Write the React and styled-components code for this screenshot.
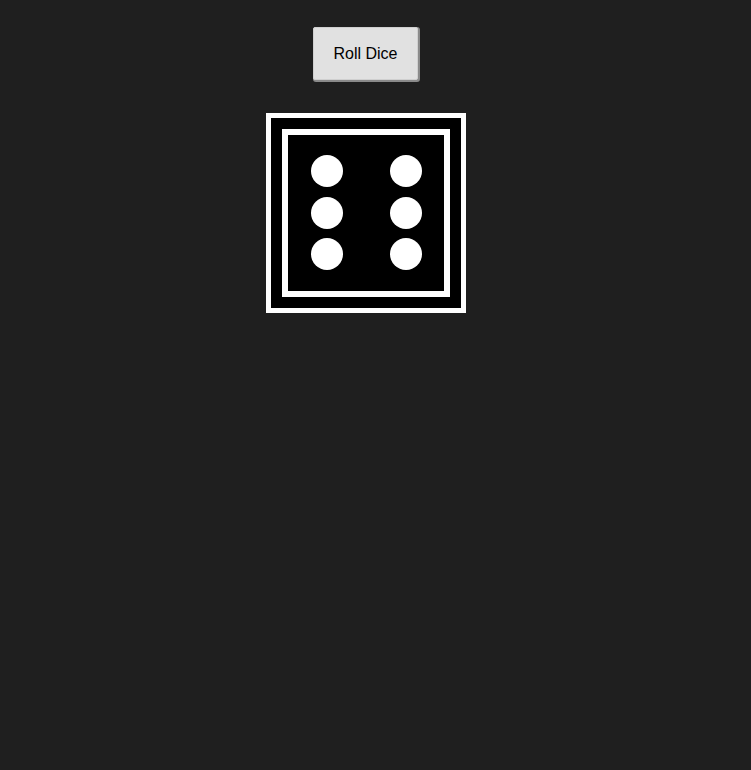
import React, { useState } from 'react';
import styled, { createGlobalStyle } from 'styled-components';

const GlobalStyle = createGlobalStyle`
  html, body {
    margin: 0;
    background: #1f1f1f;
    font-family: "Liberation Sans", Arial, sans-serif;
  }
`;

const pipLayouts = {
  1: [[50, 50]],
  2: [[30, 30], [70, 70]],
  3: [[30, 30], [50, 50], [70, 70]],
  4: [[30, 30], [70, 30], [30, 70], [70, 70]],
  5: [[30, 30], [70, 30], [50, 50], [30, 70], [70, 70]],
  6: [[30.5, 29], [70, 29], [30.5, 50], [70, 50], [30.5, 70.5], [70, 70.5]],
};

const Dice = ({ value }) => (
  <DiceFace width="200" height="200" viewBox="0 0 200 200">
    <rect x="0" y="0" width="200" height="200" fill="#fff" />
    <rect x="5" y="5" width="190" height="190" fill="#000" />
    <rect x="16" y="16" width="168" height="168" fill="#fff" />
    <rect x="22" y="22" width="156" height="156" fill="#000" />
    {pipLayouts[value].map(([cx, cy], i) => (
      <circle key={i} cx={cx * 2} cy={cy * 2} r="16" fill="#fff" />
    ))}
  </DiceFace>
);

const App = () => {
  const [value, setValue] = useState(6);

  const rollDice = () => {
    setValue(Math.floor(Math.random() * 6) + 1);
  };

  return (
    <>
      <GlobalStyle />
      <Container>
        <RollButton onClick={rollDice}>Roll Dice</RollButton>
        <Dice value={value} />
      </Container>
    </>
  );
};

const Container = styled.div`
  display: flex;
  flex-direction: column;
  align-items: center;
  gap: 33px;
  padding: 27px 20px 0 0;
`;

const RollButton = styled.button`
  width: 105px;
  height: 53px;
  padding: 0;
  background-color: #e1e1e1;
  color: #000;
  border: 1px solid #cfcfcf;
  border-radius: 2px;
  box-shadow: 1px 1px 0 1px #8a8a8a;
  font-family: "Liberation Sans", Arial, sans-serif;
  font-size: 16px;
  cursor: pointer;

  &:hover {
    background-color: #d4d4d4;
  }
`;

const DiceFace = styled.svg`
  display: block;
`;

export default App;
